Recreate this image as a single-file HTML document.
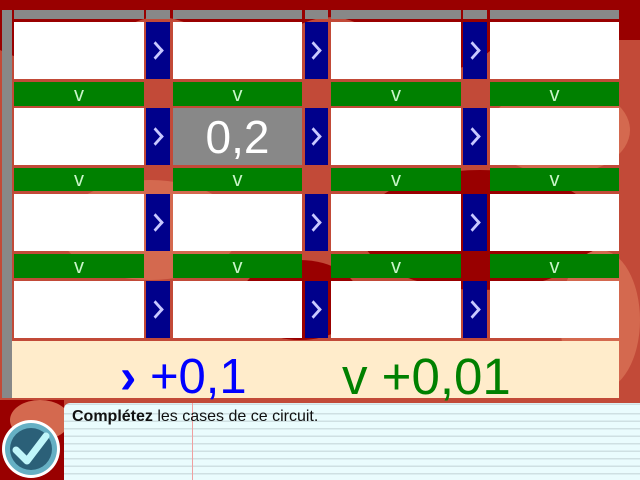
<!DOCTYPE html>
<html><head><meta charset="utf-8"><style>
*{margin:0;padding:0;box-sizing:border-box}
body{width:640px;height:480px;overflow:hidden;position:relative;background:#c24a38;font-family:"Liberation Sans",sans-serif}
.a{position:absolute}
.w{background:#fff}
.g{background:#888}
.b{background:#00008b;display:flex;align-items:center;justify-content:center}
.b::after{content:"";width:10px;height:10px;border-right:3.5px solid #c8c8ff;border-top:3.5px solid #c8c8ff;transform:translateX(-3px) scaleX(0.9) rotate(45deg)}
.v{background:#008000;color:#c8f5c8;font-size:20px;display:flex;align-items:flex-end;justify-content:center;line-height:1;padding-bottom:1px}
</style></head><body>
<svg class="a" style="left:0;top:0" width="640" height="480">
<rect width="640" height="480" fill="#c24a38"/>
<path d="M0 0H640V40H560Q520 20 480 60Q420 90 380 40Q340 0 290 30Q240 70 200 30Q150 0 110 40Q60 80 0 50Z" fill="#990000"/>
<ellipse cx="480" cy="230" rx="120" ry="60" fill="#990000"/>
<ellipse cx="150" cy="230" rx="90" ry="50" fill="#d4694f"/>
<ellipse cx="560" cy="130" rx="70" ry="45" fill="#d4694f"/>
<ellipse cx="300" cy="300" rx="60" ry="40" fill="#990000"/>
<ellipse cx="600" cy="320" rx="40" ry="70" fill="#d4694f"/>
<rect x="0" y="400" width="64" height="80" fill="#990000"/>
<ellipse cx="40" cy="420" rx="30" ry="20" fill="#d4694f"/>
</svg>
<div class="a g" style="left:2px;top:10px;width:10px;height:388px"></div>
<div class="a g" style="left:14px;top:10px;width:130px;height:9px"></div>
<div class="a g" style="left:146px;top:10px;width:24px;height:9px"></div>
<div class="a g" style="left:173px;top:10px;width:129px;height:9px"></div>
<div class="a g" style="left:305px;top:10px;width:23px;height:9px"></div>
<div class="a g" style="left:331px;top:10px;width:130px;height:9px"></div>
<div class="a g" style="left:463px;top:10px;width:24px;height:9px"></div>
<div class="a g" style="left:490px;top:10px;width:129px;height:9px"></div>

<div class="a w" style="left:14px;top:22px;width:130px;height:57px"></div>
<div class="a b" style="left:146px;top:22px;width:24px;height:57px"></div>
<div class="a w" style="left:173px;top:22px;width:129px;height:57px"></div>
<div class="a b" style="left:305px;top:22px;width:23px;height:57px"></div>
<div class="a w" style="left:331px;top:22px;width:130px;height:57px"></div>
<div class="a b" style="left:463px;top:22px;width:24px;height:57px"></div>
<div class="a w" style="left:490px;top:22px;width:129px;height:57px"></div>

<div class="a v" style="left:14px;top:82px;width:130px;height:24px">v</div>
<div class="a v" style="left:173px;top:82px;width:129px;height:24px">v</div>
<div class="a v" style="left:331px;top:82px;width:130px;height:24px">v</div>
<div class="a v" style="left:490px;top:82px;width:129px;height:24px">v</div>

<div class="a w" style="left:14px;top:108px;width:130px;height:57px"></div>
<div class="a b" style="left:146px;top:108px;width:24px;height:57px"></div>
<div class="a g" style="left:173px;top:108px;width:129px;height:57px;color:#fff;font-size:46px;display:flex;align-items:center;justify-content:center">0,2</div>
<div class="a b" style="left:305px;top:108px;width:23px;height:57px"></div>
<div class="a w" style="left:331px;top:108px;width:130px;height:57px"></div>
<div class="a b" style="left:463px;top:108px;width:24px;height:57px"></div>
<div class="a w" style="left:490px;top:108px;width:129px;height:57px"></div>

<div class="a v" style="left:14px;top:168px;width:130px;height:23px">v</div>
<div class="a v" style="left:173px;top:168px;width:129px;height:23px">v</div>
<div class="a v" style="left:331px;top:168px;width:130px;height:23px">v</div>
<div class="a v" style="left:490px;top:168px;width:129px;height:23px">v</div>

<div class="a w" style="left:14px;top:194px;width:130px;height:57px"></div>
<div class="a b" style="left:146px;top:194px;width:24px;height:57px"></div>
<div class="a w" style="left:173px;top:194px;width:129px;height:57px"></div>
<div class="a b" style="left:305px;top:194px;width:23px;height:57px"></div>
<div class="a w" style="left:331px;top:194px;width:130px;height:57px"></div>
<div class="a b" style="left:463px;top:194px;width:24px;height:57px"></div>
<div class="a w" style="left:490px;top:194px;width:129px;height:57px"></div>

<div class="a v" style="left:14px;top:254px;width:130px;height:24px">v</div>
<div class="a v" style="left:173px;top:254px;width:129px;height:24px">v</div>
<div class="a v" style="left:331px;top:254px;width:130px;height:24px">v</div>
<div class="a v" style="left:490px;top:254px;width:129px;height:24px">v</div>

<div class="a w" style="left:14px;top:281px;width:130px;height:57px"></div>
<div class="a b" style="left:146px;top:281px;width:24px;height:57px"></div>
<div class="a w" style="left:173px;top:281px;width:129px;height:57px"></div>
<div class="a b" style="left:305px;top:281px;width:23px;height:57px"></div>
<div class="a w" style="left:331px;top:281px;width:130px;height:57px"></div>
<div class="a b" style="left:463px;top:281px;width:24px;height:57px"></div>
<div class="a w" style="left:490px;top:281px;width:129px;height:57px"></div>

<div class="a" style="left:12px;top:341px;width:607px;height:57px;background:#ffeccb"></div>
<div class="a" style="left:120px;top:351px;font-size:49px;color:#0000ff;line-height:52px;white-space:nowrap"><b>›</b> +0,1</div>
<div class="a" style="left:342px;top:351px;font-size:51px;color:#008000;line-height:52px;white-space:nowrap">v +0,01</div>

<div class="a" style="left:64px;top:403px;width:576px;height:77px;border-radius:6px 0 0 0;background:#eafcfd repeating-linear-gradient(to bottom,transparent 0,transparent 6px,#cfe0e2 6px,#cfe0e2 7.5px);background-position:0 4px"></div>
<div class="a" style="left:192px;top:403px;width:1px;height:77px;background:#f0a0a0"></div>
<div class="a" style="left:72px;top:408px;font-size:16px;color:#111;white-space:nowrap">
<b>Complétez</b> les cases de ce circuit.</div>

<svg class="a" style="left:0;top:418px" width="62" height="62">
<circle cx="31" cy="31" r="29" fill="#fff"/>
<circle cx="31" cy="31" r="26" fill="#66b0c4"/>
<circle cx="31" cy="31" r="21" fill="#2b6078"/>
<path d="M16 32 L27 43 L46 18" stroke="#c0f6fa" stroke-width="7" fill="none" stroke-linecap="round" stroke-linejoin="round"/>
</svg>
</body></html>
